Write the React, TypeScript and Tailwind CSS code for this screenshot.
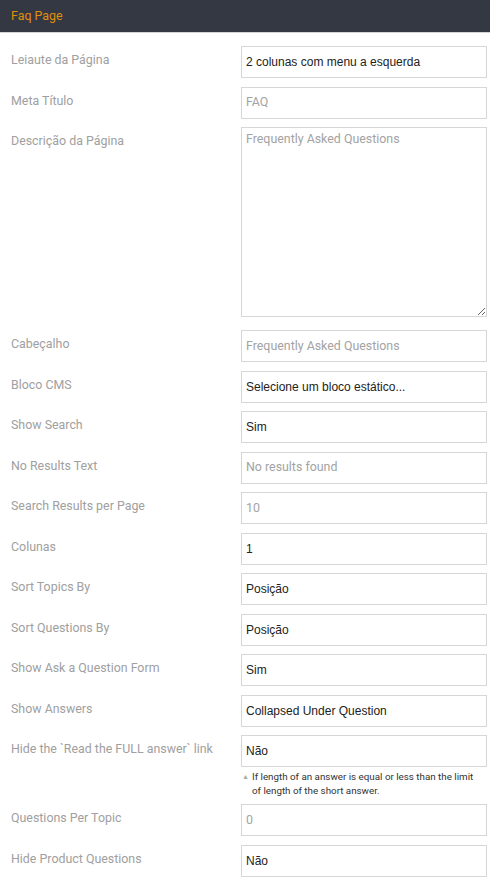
import React from "react";

type Field = {
  label: string;
  kind: "select" | "text" | "textarea";
  value?: string;
  placeholder?: string;
  note?: string;
};

const fields: Field[] = [
  { label: "Leiaute da Página", kind: "select", value: "2 colunas com menu a esquerda" },
  { label: "Meta Título", kind: "text", placeholder: "FAQ" },
  { label: "Descrição da Página", kind: "textarea", placeholder: "Frequently Asked Questions" },
  { label: "Cabeçalho", kind: "text", placeholder: "Frequently Asked Questions" },
  { label: "Bloco CMS", kind: "select", value: "Selecione um bloco estático..." },
  { label: "Show Search", kind: "select", value: "Sim" },
  { label: "No Results Text", kind: "text", placeholder: "No results found" },
  { label: "Search Results per Page", kind: "text", placeholder: "10" },
  { label: "Colunas", kind: "select", value: "1" },
  { label: "Sort Topics By", kind: "select", value: "Posição" },
  { label: "Sort Questions By", kind: "select", value: "Posição" },
  { label: "Show Ask a Question Form", kind: "select", value: "Sim" },
  { label: "Show Answers", kind: "select", value: "Collapsed Under Question" },
  {
    label: "Hide the `Read the FULL answer` link",
    kind: "select",
    value: "Não",
    note: "If length of an answer is equal or less than the limit of length of the short answer.",
  },
  { label: "Questions Per Topic", kind: "text", placeholder: "0" },
  { label: "Hide Product Questions", kind: "select", value: "Não" },
];

function Control({ f }: { f: Field }) {
  if (f.kind === "textarea") {
    return (
      <textarea
        readOnly
        placeholder={f.placeholder}
        className="block w-full h-[190px] border border-[#d6d6d6] bg-white px-[4px] py-[2px] text-[12.4px] leading-[18px] text-[#333] placeholder:text-[#a3a3a3] outline-none"
      />
    );
  }
  if (f.kind === "text") {
    return (
      <div className="h-[32px] border border-[#d6d6d6] bg-white px-[4px] flex items-center text-[12.4px] text-[#a3a3a3]">
        {f.placeholder}
      </div>
    );
  }
  return (
    <div className="h-[32px] border border-[#d6d6d6] bg-white px-[4px] flex items-center font-['Liberation_Sans',Arial,sans-serif] text-[12px] text-[#222]">
      {f.value}
    </div>
  );
}

export default function App() {
  return (
    <div className="w-[490px] min-h-[889px] bg-white font-['Roboto',sans-serif]">
      <div className="h-[33px] bg-[#333843] border-b border-[#d4d4d4] flex items-center px-[11px]">
        <span className="text-[12.4px] text-[#e08e0b]">Faq Page</span>
      </div>
      <div className="pt-[13px] pr-[3px]">
        {fields.map((f) => (
          <div
            key={f.label}
            className={`flex ${f.kind === "textarea" ? "mb-[13px]" : f.note ? "mb-[6px]" : "mb-[8.5px]"}`}
          >
            <div className="w-[241px] shrink-0 pl-[11px] pt-[5px] text-[12.4px] leading-[18px] text-[#a0a0a0]">
              {f.label}
            </div>
            <div className="flex-1">
              <Control f={f} />
              {f.note && (
                <div className="flex pt-[3px] pl-[1px] text-[9.8px] leading-[14px] text-[#333]">
                  <span className="w-[10px] shrink-0 text-[7px] text-[#aaa] leading-[14px]">▲</span>
                  <span className="w-[228px]">{f.note}</span>
                </div>
              )}
            </div>
          </div>
        ))}
      </div>
    </div>
  );
}
